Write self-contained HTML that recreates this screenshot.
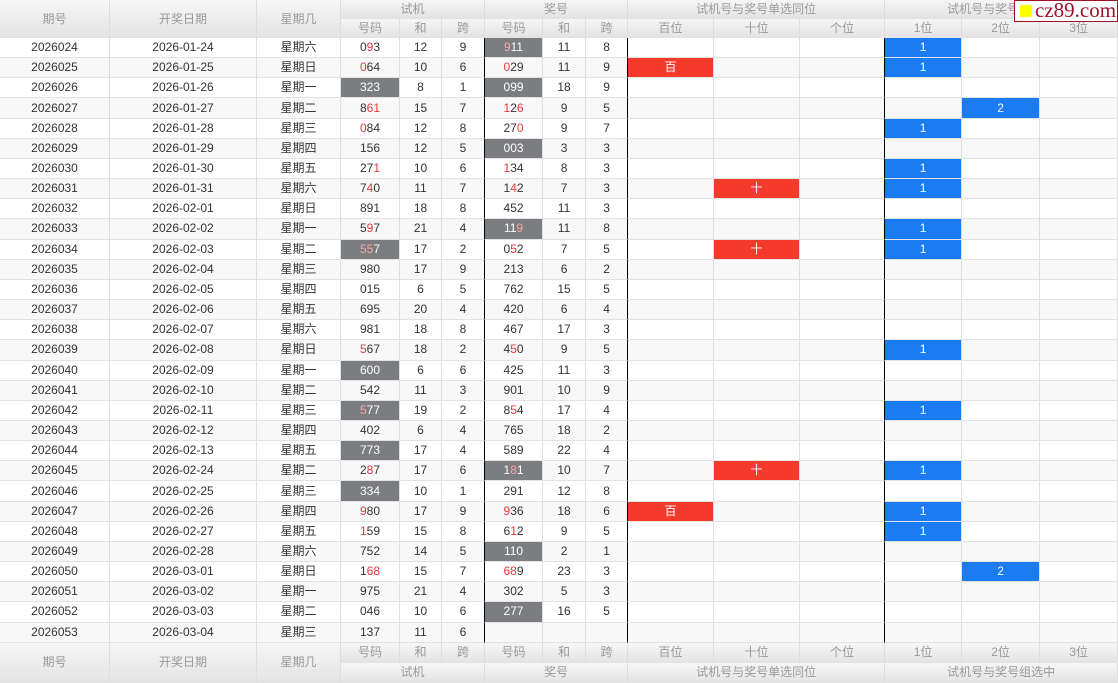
<!DOCTYPE html>
<html><head><meta charset="utf-8"><style>
*{margin:0;padding:0;box-sizing:border-box}
body{width:1118px;height:683px;overflow:hidden;background:#fff;font-family:"Liberation Sans","Noto Sans CJK SC",sans-serif;font-size:12px;color:#333;position:relative}
table{border-spacing:0;table-layout:fixed;width:1118px}
td,th{padding:0;text-align:center;white-space:nowrap;overflow:hidden;border-right:1px solid #dedede;border-bottom:1px solid #e2e2e2;font-weight:normal}
th{background:linear-gradient(#f6f6f6,#e4e4e4);color:#999;height:19px;line-height:18px}
th.big{height:38px}
tbody tr{height:20.17px}
tbody td{line-height:19px}
tbody tr:nth-child(even) td{background:#f8f8f8}
tbody td.k{border-right:1px solid #000}
tbody tr td.g{background:#7b7d80;color:#fff}
i{font-style:normal;color:#e8383d}
td.g i{color:#f7a8a8}
tbody tr td.r{background:#f43b2b;color:#fff}
tbody tr td.b{background:#1a7cf0;color:#fff}
tfoot th{height:20px}
.wm{position:absolute;left:1014px;top:0;width:104px;height:22px;background:#fff;border:1px solid #a0102a;color:#a0102a;font-family:"Liberation Serif",serif;font-size:21px;line-height:19px;padding-left:20px}
.wm:before{content:"";position:absolute;left:5px;top:4px;width:12px;height:12px;background:#ffff00}
</style></head><body>
<table>
<colgroup><col style="width:110px"><col style="width:147px"><col style="width:84px"><col style="width:59px"><col style="width:42px"><col style="width:43px"><col style="width:58px"><col style="width:43px"><col style="width:42px"><col style="width:86px"><col style="width:86px"><col style="width:85px"><col style="width:77px"><col style="width:78px"><col style="width:78px"></colgroup>
<thead>
<tr><th rowspan="2" class="big">期号</th><th rowspan="2" class="big">开奖日期</th><th rowspan="2" class="big">星期几</th><th colspan="3">试机</th><th colspan="3">奖号</th><th colspan="3">试机号与奖号单选同位</th><th colspan="3">试机号与奖号组选中</th></tr>
<tr><th>号码</th><th>和</th><th>跨</th><th>号码</th><th>和</th><th>跨</th><th>百位</th><th>十位</th><th>个位</th><th>1位</th><th>2位</th><th>3位</th></tr>
</thead>
<tbody>
<tr><td>2026024</td><td>2026-01-24</td><td>星期六</td><td>0<i>9</i>3</td><td>12</td><td class="k">9</td><td class="g"><i>9</i>11</td><td>11</td><td class="k">8</td><td></td><td></td><td class="k"></td><td class="b">1</td><td></td><td></td></tr>
<tr><td>2026025</td><td>2026-01-25</td><td>星期日</td><td><i>0</i>64</td><td>10</td><td class="k">6</td><td><i>0</i>29</td><td>11</td><td class="k">9</td><td class="r">百</td><td></td><td class="k"></td><td class="b">1</td><td></td><td></td></tr>
<tr><td>2026026</td><td>2026-01-26</td><td>星期一</td><td class="g">323</td><td>8</td><td class="k">1</td><td class="g">099</td><td>18</td><td class="k">9</td><td></td><td></td><td class="k"></td><td></td><td></td><td></td></tr>
<tr><td>2026027</td><td>2026-01-27</td><td>星期二</td><td>8<i>61</i></td><td>15</td><td class="k">7</td><td><i>1</i>2<i>6</i></td><td>9</td><td class="k">5</td><td></td><td></td><td class="k"></td><td></td><td class="b">2</td><td></td></tr>
<tr><td>2026028</td><td>2026-01-28</td><td>星期三</td><td><i>0</i>84</td><td>12</td><td class="k">8</td><td>27<i>0</i></td><td>9</td><td class="k">7</td><td></td><td></td><td class="k"></td><td class="b">1</td><td></td><td></td></tr>
<tr><td>2026029</td><td>2026-01-29</td><td>星期四</td><td>156</td><td>12</td><td class="k">5</td><td class="g">003</td><td>3</td><td class="k">3</td><td></td><td></td><td class="k"></td><td></td><td></td><td></td></tr>
<tr><td>2026030</td><td>2026-01-30</td><td>星期五</td><td>27<i>1</i></td><td>10</td><td class="k">6</td><td><i>1</i>34</td><td>8</td><td class="k">3</td><td></td><td></td><td class="k"></td><td class="b">1</td><td></td><td></td></tr>
<tr><td>2026031</td><td>2026-01-31</td><td>星期六</td><td>7<i>4</i>0</td><td>11</td><td class="k">7</td><td>1<i>4</i>2</td><td>7</td><td class="k">3</td><td></td><td class="r">十</td><td class="k"></td><td class="b">1</td><td></td><td></td></tr>
<tr><td>2026032</td><td>2026-02-01</td><td>星期日</td><td>891</td><td>18</td><td class="k">8</td><td>452</td><td>11</td><td class="k">3</td><td></td><td></td><td class="k"></td><td></td><td></td><td></td></tr>
<tr><td>2026033</td><td>2026-02-02</td><td>星期一</td><td>5<i>9</i>7</td><td>21</td><td class="k">4</td><td class="g">11<i>9</i></td><td>11</td><td class="k">8</td><td></td><td></td><td class="k"></td><td class="b">1</td><td></td><td></td></tr>
<tr><td>2026034</td><td>2026-02-03</td><td>星期二</td><td class="g"><i>55</i>7</td><td>17</td><td class="k">2</td><td>0<i>5</i>2</td><td>7</td><td class="k">5</td><td></td><td class="r">十</td><td class="k"></td><td class="b">1</td><td></td><td></td></tr>
<tr><td>2026035</td><td>2026-02-04</td><td>星期三</td><td>980</td><td>17</td><td class="k">9</td><td>213</td><td>6</td><td class="k">2</td><td></td><td></td><td class="k"></td><td></td><td></td><td></td></tr>
<tr><td>2026036</td><td>2026-02-05</td><td>星期四</td><td>015</td><td>6</td><td class="k">5</td><td>762</td><td>15</td><td class="k">5</td><td></td><td></td><td class="k"></td><td></td><td></td><td></td></tr>
<tr><td>2026037</td><td>2026-02-06</td><td>星期五</td><td>695</td><td>20</td><td class="k">4</td><td>420</td><td>6</td><td class="k">4</td><td></td><td></td><td class="k"></td><td></td><td></td><td></td></tr>
<tr><td>2026038</td><td>2026-02-07</td><td>星期六</td><td>981</td><td>18</td><td class="k">8</td><td>467</td><td>17</td><td class="k">3</td><td></td><td></td><td class="k"></td><td></td><td></td><td></td></tr>
<tr><td>2026039</td><td>2026-02-08</td><td>星期日</td><td><i>5</i>67</td><td>18</td><td class="k">2</td><td>4<i>5</i>0</td><td>9</td><td class="k">5</td><td></td><td></td><td class="k"></td><td class="b">1</td><td></td><td></td></tr>
<tr><td>2026040</td><td>2026-02-09</td><td>星期一</td><td class="g">600</td><td>6</td><td class="k">6</td><td>425</td><td>11</td><td class="k">3</td><td></td><td></td><td class="k"></td><td></td><td></td><td></td></tr>
<tr><td>2026041</td><td>2026-02-10</td><td>星期二</td><td>542</td><td>11</td><td class="k">3</td><td>901</td><td>10</td><td class="k">9</td><td></td><td></td><td class="k"></td><td></td><td></td><td></td></tr>
<tr><td>2026042</td><td>2026-02-11</td><td>星期三</td><td class="g"><i>5</i>77</td><td>19</td><td class="k">2</td><td>8<i>5</i>4</td><td>17</td><td class="k">4</td><td></td><td></td><td class="k"></td><td class="b">1</td><td></td><td></td></tr>
<tr><td>2026043</td><td>2026-02-12</td><td>星期四</td><td>402</td><td>6</td><td class="k">4</td><td>765</td><td>18</td><td class="k">2</td><td></td><td></td><td class="k"></td><td></td><td></td><td></td></tr>
<tr><td>2026044</td><td>2026-02-13</td><td>星期五</td><td class="g">773</td><td>17</td><td class="k">4</td><td>589</td><td>22</td><td class="k">4</td><td></td><td></td><td class="k"></td><td></td><td></td><td></td></tr>
<tr><td>2026045</td><td>2026-02-24</td><td>星期二</td><td>2<i>8</i>7</td><td>17</td><td class="k">6</td><td class="g">1<i>8</i>1</td><td>10</td><td class="k">7</td><td></td><td class="r">十</td><td class="k"></td><td class="b">1</td><td></td><td></td></tr>
<tr><td>2026046</td><td>2026-02-25</td><td>星期三</td><td class="g">334</td><td>10</td><td class="k">1</td><td>291</td><td>12</td><td class="k">8</td><td></td><td></td><td class="k"></td><td></td><td></td><td></td></tr>
<tr><td>2026047</td><td>2026-02-26</td><td>星期四</td><td><i>9</i>80</td><td>17</td><td class="k">9</td><td><i>9</i>36</td><td>18</td><td class="k">6</td><td class="r">百</td><td></td><td class="k"></td><td class="b">1</td><td></td><td></td></tr>
<tr><td>2026048</td><td>2026-02-27</td><td>星期五</td><td><i>1</i>59</td><td>15</td><td class="k">8</td><td>6<i>1</i>2</td><td>9</td><td class="k">5</td><td></td><td></td><td class="k"></td><td class="b">1</td><td></td><td></td></tr>
<tr><td>2026049</td><td>2026-02-28</td><td>星期六</td><td>752</td><td>14</td><td class="k">5</td><td class="g">110</td><td>2</td><td class="k">1</td><td></td><td></td><td class="k"></td><td></td><td></td><td></td></tr>
<tr><td>2026050</td><td>2026-03-01</td><td>星期日</td><td>1<i>68</i></td><td>15</td><td class="k">7</td><td><i>68</i>9</td><td>23</td><td class="k">3</td><td></td><td></td><td class="k"></td><td></td><td class="b">2</td><td></td></tr>
<tr><td>2026051</td><td>2026-03-02</td><td>星期一</td><td>975</td><td>21</td><td class="k">4</td><td>302</td><td>5</td><td class="k">3</td><td></td><td></td><td class="k"></td><td></td><td></td><td></td></tr>
<tr><td>2026052</td><td>2026-03-03</td><td>星期二</td><td>046</td><td>10</td><td class="k">6</td><td class="g">277</td><td>16</td><td class="k">5</td><td></td><td></td><td class="k"></td><td></td><td></td><td></td></tr>
<tr><td>2026053</td><td>2026-03-04</td><td>星期三</td><td>137</td><td>11</td><td class="k">6</td><td></td><td></td><td class="k"></td><td></td><td></td><td class="k"></td><td></td><td></td><td></td></tr>
</tbody>
<tfoot>
<tr><th rowspan="2" class="big" style="height:40px">期号</th><th rowspan="2" class="big" style="height:40px">开奖日期</th><th rowspan="2" class="big" style="height:40px">星期几</th><th>号码</th><th>和</th><th>跨</th><th>号码</th><th>和</th><th>跨</th><th>百位</th><th>十位</th><th>个位</th><th>1位</th><th>2位</th><th>3位</th></tr>
<tr><th colspan="3">试机</th><th colspan="3">奖号</th><th colspan="3">试机号与奖号单选同位</th><th colspan="3">试机号与奖号组选中</th></tr>
</tfoot>
</table>
<div class="wm">cz89.com</div>
</body></html>
